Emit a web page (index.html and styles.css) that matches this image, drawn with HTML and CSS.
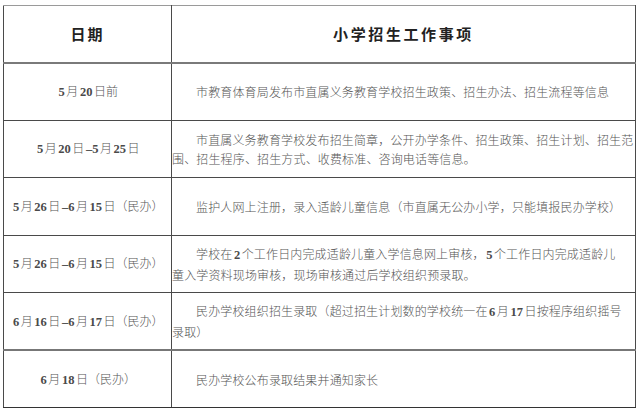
FILE: index.html
```html
<!DOCTYPE html>
<html lang="zh-CN">
<head>
<meta charset="utf-8">
<title>小学招生工作事项</title>
<link rel="stylesheet" href="styles.css">
</head>
<body>
<table class="sched">
  <colgroup><col class="c-date"><col class="c-item"></colgroup>
  <thead>
    <tr class="r-head">
      <th class="h-date">日期</th>
      <th class="h-item">小学招生工作事项</th>
    </tr>
  </thead>
  <tbody>
    <tr class="r">
      <td class="d"><b class="n">5</b>月<b class="n">20</b>日前</td>
      <td class="t"><span class="nw">市教育体育局发布市直属义务教育学校招生政策、招生办法、招生流程等信息</span></td>
    </tr>
    <tr class="r">
      <td class="d"><b class="n">5</b>月<b class="n">20</b>日<b class="n">–5</b>月<b class="n">25</b>日</td>
      <td class="t"><span class="nw">市直属义务教育学校发布招生简章，公开办学条件、招生政策、招生计划、招生范</span><br><span class="nw">围、招生程序、招生方式、收费标准、咨询电话等信息。</span></td>
    </tr>
    <tr class="r">
      <td class="d"><b class="n">5</b>月<b class="n">26</b>日<b class="n">–6</b>月<b class="n">15</b>日（民办）</td>
      <td class="t"><span class="nw">监护人网上注册，录入适龄儿童信息（市直属无公办小学，只能填报民办学校）</span></td>
    </tr>
    <tr class="r">
      <td class="d"><b class="n">5</b>月<b class="n">26</b>日<b class="n">–6</b>月<b class="n">15</b>日（民办）</td>
      <td class="t"><span class="nw">学校在<b class="n">2</b>个工作日内完成适龄儿童入学信息网上审核，<b class="n">5</b>个工作日内完成适龄儿</span><br><span class="nw">童入学资料现场审核，现场审核通过后学校组织预录取。</span></td>
    </tr>
    <tr class="r">
      <td class="d"><b class="n">6</b>月<b class="n">16</b>日<b class="n">–6</b>月<b class="n">17</b>日（民办）</td>
      <td class="t"><span class="nw">民办学校组织招生录取（超过招生计划数的学校统一在<b class="n">6</b>月<b class="n">17</b>日按程序组织摇号</span><br><span class="nw">录取）</span></td>
    </tr>
    <tr class="r">
      <td class="d"><b class="n">6</b>月<b class="n">18</b>日（民办）</td>
      <td class="t"><span class="nw">民办学校公布录取结果并通知家长</span></td>
    </tr>
  </tbody>
</table>
</body>
</html>
```
FILE: styles.css
```css
html, body {
  margin: 0;
  padding: 0;
  background: #ffffff;
}

body {
  padding: 5px 0 0 3px;
  font-family: "Noto Sans CJK SC", "Noto Sans", sans-serif;
}

.sched {
  border-collapse: collapse;
  table-layout: fixed;
  width: 633px;
}

.c-date { width: 168px; }

.sched th,
.sched td {
  border: 1px solid #4a4a4a;
  padding: 0;
  overflow: hidden;
}

.r-head { height: 57px; }
.r { height: 57.5px; }

.r-head th {
  border-top-color: #9a9a9a;
  border-bottom: 2px solid #7a7a7a;
  font-weight: 700;
  font-size: 15px;
  color: #222;
  text-align: center;
  vertical-align: middle;
}

.h-date { letter-spacing: 2px; padding-left: 4px; }
.h-item { letter-spacing: 2.6px; padding-left: 10px; }

.d {
  text-align: center;
  vertical-align: middle;
  font-size: 12px;
  font-weight: 300;
  color: #555;
  line-height: 19px;
}

.t {
  text-align: left;
  vertical-align: middle;
  font-size: 12px;
  font-weight: 300;
  color: #555;
  line-height: 19px;
  padding-left: 1px;
  text-indent: 24px;
  letter-spacing: 0.15px;
}

.t br + .nw { text-indent: 0; }

.nw { white-space: nowrap; }

.n {
  font-family: "Liberation Serif", serif;
  font-weight: 700;
  font-size: 12.5px;
  color: #4a4a4a;
  padding: 0 1.5px;
  letter-spacing: 0;
}

.sched tbody tr:last-child td { border-bottom-color: #333; }
.sched tbody tr:nth-child(5) td { border-bottom: 2px solid #777; }
```
